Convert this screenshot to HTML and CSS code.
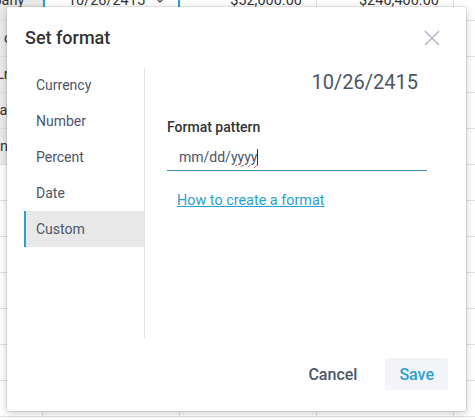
FILE: index.html
```html
<!DOCTYPE html>
<html lang="en">
<head>
<meta charset="utf-8">
<title>Set format</title>
<link rel="stylesheet" href="styles.css">
</head>
<body>
<div class="sheet">
  <div class="cell first top">Company</div>
  <div class="cell selected top"><span>10/26/2415</span><svg class="chev" width="10" height="6" viewBox="0 0 10 6"><path d="M1 1l4 4 4-4" fill="none" stroke="#555" stroke-width="1.4"/></svg></div>
  <div class="cell num top">$52,000.00</div>
  <div class="cell num top">$240,400.00</div>
  <div class="cell top"></div>

  <div class="cell first">Acme co</div><div class="cell"></div><div class="cell"></div><div class="cell"></div><div class="cell"></div>
  <div class="cell first">Stun Ln</div><div class="cell"></div><div class="cell"></div><div class="cell"></div><div class="cell"></div>
  <div class="cell first">Tetra al</div><div class="cell"></div><div class="cell"></div><div class="cell"></div><div class="cell"></div>
  <div class="cell first">Delta na</div><div class="cell"></div><div class="cell"></div><div class="cell"></div><div class="cell"></div>

  <div class="cell plain"></div><div class="cell"></div><div class="cell"></div><div class="cell"></div><div class="cell"></div>
  <div class="cell plain"></div><div class="cell"></div><div class="cell"></div><div class="cell"></div><div class="cell"></div>
  <div class="cell plain"></div><div class="cell"></div><div class="cell"></div><div class="cell"></div><div class="cell"></div>
  <div class="cell plain"></div><div class="cell"></div><div class="cell"></div><div class="cell"></div><div class="cell"></div>
  <div class="cell plain"></div><div class="cell"></div><div class="cell"></div><div class="cell"></div><div class="cell"></div>
  <div class="cell plain"></div><div class="cell"></div><div class="cell"></div><div class="cell"></div><div class="cell"></div>
  <div class="cell plain"></div><div class="cell"></div><div class="cell"></div><div class="cell"></div><div class="cell"></div>
</div>

<div class="dialog" role="dialog" aria-label="Set format">
  <div class="dialog-header">
    <h2 class="dialog-title">Set format</h2>
    <svg class="close" width="16" height="16" viewBox="0 0 16 16" aria-label="Close"><path d="M1 1L15 15M15 1L1 15" stroke="#a9b3c4" stroke-width="1.3" fill="none"/></svg>
  </div>
  <div class="dialog-body">
    <ul class="nav">
      <li class="nav-item">Currency</li>
      <li class="nav-item">Number</li>
      <li class="nav-item">Percent</li>
      <li class="nav-item">Date</li>
      <li class="nav-item active">Custom</li>
    </ul>
    <div class="content">
      <div class="preview">10/26/2415</div>
      <div class="label">Format pattern</div>
      <div class="field">mm/dd/<span class="misspelled">yyyy</span><span class="caret"></span></div>
      <a class="help" href="#">How to create a format</a>
    </div>
  </div>
  <div class="dialog-footer">
    <button class="btn cancel">Cancel</button>
    <button class="btn save">Save</button>
  </div>
</div>
</body>
</html>
```
FILE: styles.css
```css
* { box-sizing: border-box; }
html, body { margin: 0; padding: 0; }
body {
  width: 475px;
  height: 420px;
  overflow: hidden;
  background: #fff;
  font-family: Roboto, "Liberation Sans", sans-serif;
  position: relative;
}

.sheet {
  display: grid;
  grid-template-columns: 84px 137px 137px 137px 137px;
  grid-auto-rows: 36px;
  margin-left: -41px;
  margin-top: -15px;
  font-size: 14.5px;
  color: #333;
}
.cell {
  border-right: 1px solid #e1e1e1;
  border-bottom: 1px solid #e1e1e1;
  display: flex;
  align-items: center;
  padding: 0 12px;
  white-space: nowrap;
  overflow: hidden;
}
.cell.top { padding-bottom: 5px; }
.cell.first {
  background: #ebebeb;
  padding-left: 4px;
}
.cell.num { justify-content: flex-end; padding-right: 14px; }
.cell.selected {
  border-left: 2px solid #2aa0cf;
  border-right: 2px solid #2aa0cf;
  justify-content: center;
  gap: 10px;
  padding-left: 22px;
}
.chev { flex: none; }

.dialog {
  position: absolute;
  left: 7px;
  top: 7px;
  width: 459px;
  height: 404px;
  background: #fff;
  border-radius: 2px;
  box-shadow: 0 0 0 1px rgba(0,0,0,0.07), 0 2px 8px rgba(0,0,0,0.22);
  display: flex;
  flex-direction: column;
}
.dialog-header {
  height: 61px;
  padding: 20px 26px 0 18px;
  display: flex;
  justify-content: space-between;
  align-items: flex-start;
}
.dialog-title {
  margin: 0;
  font-size: 18px;
  line-height: 22px;
  font-weight: 500;
  color: #333;
}
.close { margin-top: 3px; }

.dialog-body {
  height: 270px;
  display: flex;
  padding-left: 17px;
}
.nav {
  list-style: none;
  margin: 0;
  padding: 0;
  width: 121px;
  border-right: 1px solid #dde1e8;
}
.nav-item {
  height: 36px;
  line-height: 36px;
  padding-left: 12px;
  font-size: 14px;
  color: #4a5568;
}
.nav-item:first-child { margin-top: -1px; }
.nav-item.active {
  background: #e8e8e8;
  border-left: 2px solid #2aa0cf;
  padding-left: 10px;
}

.content {
  padding-left: 22px;
  width: 282px;
  display: flex;
  flex-direction: column;
}
.preview {
  margin-top: 2px;
  text-align: right;
  padding-right: 9px;
  font-size: 20px;
  line-height: 24px;
  color: #4a5568;
}
.label {
  margin-top: 23px;
  font-size: 14px;
  line-height: 20px;
  font-weight: 500;
  color: #333;
}
.field {
  margin-top: 4px;
  height: 30px;
  border-bottom: 1px solid #3b8fae;
  padding: 0 12px 3px;
  display: flex;
  align-items: flex-end;
  font-size: 14px;
  line-height: 20px;
  color: #4a5568;
}
.misspelled {
  text-decoration: underline wavy #e0332f;
  text-decoration-thickness: 1px;
  text-underline-offset: 2px;
}
.caret {
  display: inline-block;
  width: 1px;
  height: 16px;
  background: #333;
  margin-bottom: 2px;
}
.help {
  margin-top: 20px;
  padding-left: 10px;
  font-size: 14.4px;
  line-height: 20px;
  color: #2aa0cf;
  text-decoration: underline;
  align-self: flex-start;
}

.dialog-footer {
  flex: 1;
  display: flex;
  justify-content: flex-end;
  align-items: flex-start;
  padding: 20px 18px 0 0;
  gap: 14px;
}
.btn {
  height: 32px;
  padding: 0 14px;
  border: none;
  border-radius: 2px;
  background: transparent;
  font-family: Roboto, "Liberation Sans", sans-serif;
  font-size: 16px;
  font-weight: 500;
  cursor: pointer;
}
.btn.cancel { color: #4a5568; }
.btn.save { background: #f2f4f8; color: #2aa0cf; }
```
